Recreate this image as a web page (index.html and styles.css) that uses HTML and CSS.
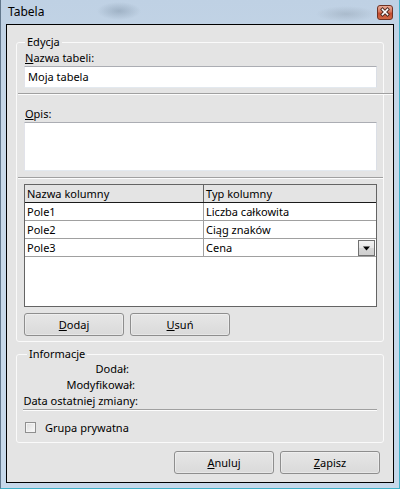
FILE: index.html
```html
<!DOCTYPE html>
<html lang="pl">
<head>
<meta charset="utf-8">
<title>Tabela</title>
<link rel="stylesheet" href="styles.css">
</head>
<body>
<div class="window">
  <div class="titlebar">
    <span class="title">Tabela</span>
    <span class="close" aria-label="Zamknij">
      <svg width="16" height="15" viewBox="0 0 16 15">
        <defs>
          <linearGradient id="cg" x1="0" y1="0" x2="0" y2="1">
            <stop offset="0" stop-color="#eab09d"/>
            <stop offset="0.45" stop-color="#d6755a"/>
            <stop offset="0.55" stop-color="#c24a2e"/>
            <stop offset="1" stop-color="#d36a45"/>
          </linearGradient>
        </defs>
        <rect x="0.5" y="0.5" width="15" height="14" rx="2.5" fill="url(#cg)" stroke="#6e3224"/>
        <path d="M5.5 4.5 L10.5 9.5 M10.5 4.5 L5.5 9.5" stroke="#4a2a22" stroke-width="3.4" stroke-linecap="square"/>
        <path d="M5.5 4.5 L10.5 9.5 M10.5 4.5 L5.5 9.5" stroke="#ffffff" stroke-width="1.6" stroke-linecap="square"/>
      </svg>
    </span>
  </div>
  <div class="client">
    <fieldset class="group group-edit">
      <legend>Edycja</legend>
      <div class="field-label"><u>N</u>azwa tabeli:</div>
      <div class="textbox">Moja tabela</div>
      <div class="sep sep-wide"></div>
      <div class="field-label label-opis"><u>O</u>pis:</div>
      <div class="textbox textarea"></div>
      <div class="sep sep-mid"></div>
      <div class="grid">
        <div class="grid-row grid-head">
          <div class="cell">Nazwa kolumny</div>
          <div class="cell">Typ kolumny</div>
        </div>
        <div class="grid-row">
          <div class="cell">Pole1</div>
          <div class="cell">Liczba całkowita</div>
        </div>
        <div class="grid-row">
          <div class="cell">Pole2</div>
          <div class="cell">Ciąg znaków</div>
        </div>
        <div class="grid-row">
          <div class="cell">Pole3</div>
          <div class="cell cell-combo">
            <span>Cena</span>
            <span class="dd">
              <svg width="15" height="14" viewBox="0 0 15 14"><path d="M4 5.5 H11 L7.5 9.5 Z" fill="#000"/></svg>
            </span>
          </div>
        </div>
      </div>
      <div class="btn-row">
        <span class="btn"><u>D</u>odaj</span>
        <span class="btn"><u>U</u>suń</span>
      </div>
    </fieldset>
    <fieldset class="group group-info">
      <legend>Informacje</legend>
      <div class="info-row"><span class="info-label info-added">Dodał:</span></div>
      <div class="info-row"><span class="info-label info-modified">Modyfikował:</span></div>
      <div class="info-row"><span class="info-label">Data ostatniej zmiany:</span></div>
      <div class="sep sep-info"></div>
      <div class="check-row">
        <span class="checkbox"></span>
        <span>Grupa prywatna</span>
      </div>
    </fieldset>
    <div class="dialog-buttons">
      <span class="btn"><u>A</u>nuluj</span>
      <span class="btn"><u>Z</u>apisz</span>
    </div>
  </div>
</div>
</body>
</html>
```

FILE: styles.css
```css
* { box-sizing: border-box; }
html, body { margin: 0; padding: 0; }
body {
  width: 400px;
  height: 489px;
  overflow: hidden;
  font-family: "Noto Sans", "Open Sans", sans-serif;
  font-size: 11px;
  color: #000;
}
u { text-decoration: underline; text-underline-offset: 1px; }

.window {
  width: 400px;
  height: 489px;
  display: flex;
  flex-direction: column;
  border-left: 1px solid #62778c;
  border-right: 1px solid #3fb0c8;
  border-bottom: 1px solid #3fb0c8;
  background:
    radial-gradient(ellipse 22px 9px at 118px 11px, rgba(120,140,160,0.45), rgba(120,140,160,0)),
    radial-gradient(ellipse 30px 8px at 345px 14px, rgba(130,145,160,0.35), rgba(130,145,160,0)),
    linear-gradient(180deg, #bfd1e4 0%, #c8d8e8 30%, #c6d8ea 100%);
}

.titlebar {
  height: 24px;
  flex: none;
  display: flex;
  align-items: center;
  justify-content: space-between;
  padding: 0 6px 0 7px;
}
.title { font-size: 12px; line-height: 14px; color: #000; }
.close { width: 16px; height: 15px; display: block; }
.close svg { display: block; }

.client {
  flex: 1;
  margin: 0 5px 5px 5px;
  border: 1px solid #000;
  background: #e4e4e4;
  display: flex;
  flex-direction: column;
}

.group {
  margin: 10px 9px 0 9px;
  min-width: 0;
  padding: 0 6px 5px 7px;
  border: 1px solid #fafafa;
  border-radius: 3px;
}
.group legend {
  padding: 0 2px;
  margin-left: 1px;
  line-height: 14px;
  height: 14px;
}
.group-info { margin-top: 5px; padding-bottom: 7px; }
.group-info legend { margin-left: 3px; }

.field-label { line-height: 14px; height: 15px; margin-top: 2px; padding-left: 1px; }
.label-opis { margin-top: 12px; }

.textbox {
  height: 22px;
  background: #fff;
  border: 1px solid;
  border-color: #abadb3 #dbdfe6 #e3e9ef #e2e3ea;
  padding: 0 3px;
  line-height: 19px;
}
.textarea { height: 49px; }

.sep {
  height: 2px;
  border-top: 1px solid #a0a0a0;
  border-bottom: 1px solid #fcfcfc;
}
.sep-wide { margin: 5px -16px 0 -6px; }
.sep-mid { margin: 6px -6px 0 -6px; }
.sep-info { margin: 0 0 0 -1px; }

.grid {
  margin-top: 5px;
  height: 123px;
  border: 1px solid #646464;
  background: #fff;
}
.grid-row {
  display: grid;
  grid-template-columns: 179px 1fr;
  height: 18px;
  border-bottom: 1px solid #a0a0a0;
}
.grid-head {
  background: #e4e4e4;
  border-bottom-color: #1a1a1a;
}
.cell {
  padding-left: 2px;
  line-height: 17px;
  white-space: nowrap;
  overflow: hidden;
}
.cell:first-child { border-right: 1px solid #a0a0a0; }
.grid-head .cell:first-child { border-right-color: #646464; }
.grid-head .cell { line-height: 18px; }
.cell-combo {
  display: flex;
  align-items: center;
  justify-content: space-between;
  padding-right: 1px;
}
.dd {
  width: 17px;
  height: 16px;
  border: 1px solid #707070;
  background: linear-gradient(180deg, #f2f2f2 0%, #e6e6e6 50%, #d6d6d6 51%, #cfcfcf 100%);
  display: block;
}
.dd svg { display: block; }

.btn-row {
  margin-top: 6px;
  display: flex;
  gap: 6px;
}
.btn {
  width: 100px;
  height: 23px;
  border: 1px solid #8e8e8e;
  border-radius: 3px;
  background: linear-gradient(180deg, #e6e6e6 0%, #dadada 100%);
  box-shadow: inset 0 0 0 1px rgba(255,255,255,0.35);
  display: flex;
  align-items: center;
  justify-content: center;
  line-height: 14px;
}

.info-row { height: 16px; line-height: 15px; }
.info-label { display: block; width: 115px; margin-left: -1px; text-align: right; white-space: nowrap; }
.info-added { width: 106px; }
.info-modified { width: 112px; }

.check-row {
  margin-top: 8px;
  height: 16px;
  display: flex;
  align-items: center;
  gap: 9px;
  padding-left: 1px;
}
.checkbox {
  width: 11px;
  height: 11px;
  margin-top: 1px;
  border: 1px solid #8f8f8f;
  background: linear-gradient(135deg, #dcdcdc 0%, #fbfbfb 100%);
  box-shadow: inset 0 0 0 1px #f4f4f4;
  display: block;
}

.dialog-buttons {
  margin-top: 8px;
  display: flex;
  justify-content: flex-end;
  gap: 6px;
  padding-right: 13px;
}
```
